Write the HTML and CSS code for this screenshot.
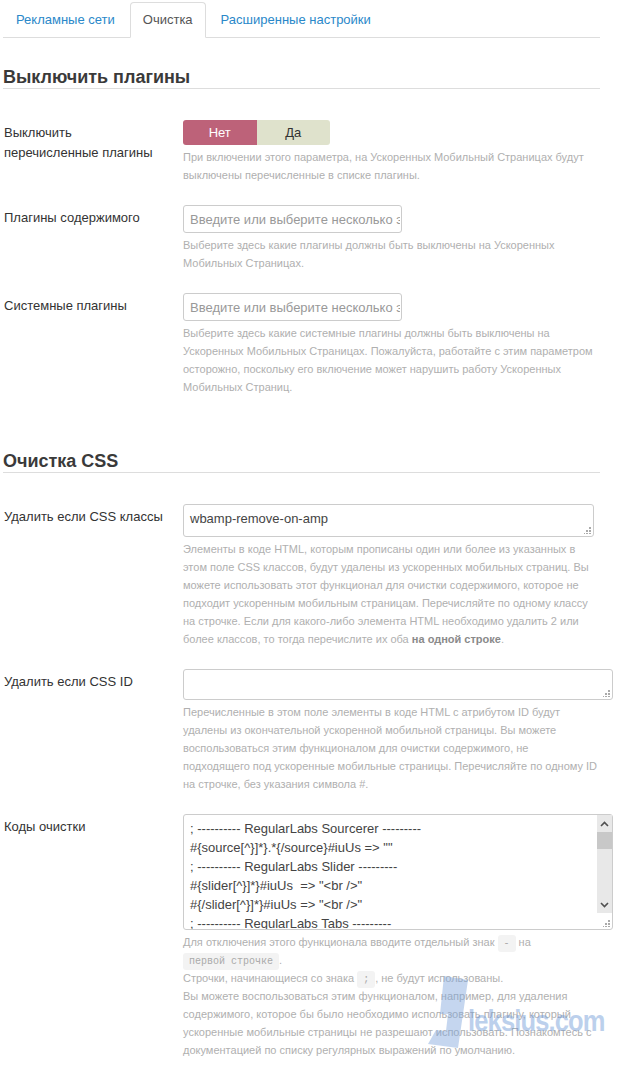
FILE: index.html
```html
<!doctype html>
<html lang="ru">
    <head>
        <meta charset="utf-8">
        <title>Очистка</title>
        <link rel="stylesheet" href="styles.css">
    </head>
    <body>
        <div class="page">
            <!-- Tabs -->
            <ul class="tabs">
                <li><a href="#ads">Рекламные сети</a></li>
                <li class="active"><a href="#cleanup">Очистка</a></li>
                <li><a href="#advanced">Расширенные настройки</a></li>
            </ul>

            <!-- Plugins -->
            <h2 class="section-title first">Выключить плагины</h2>

            <div class="field">
                <div class="field-label">Выключить<br>перечисленные плагины</div>
                <div class="field-control">
                    <div class="switch">
                        <span class="switch-option on">Нет</span>
                        <span class="switch-option">Да</span>
                    </div>
                    <p class="hint">При включении этого параметра, на Ускоренных Мобильный Страницах будут<br>выключены перечисленные в списке плагины.</p>
                </div>
            </div>

            <div class="field">
                <div class="field-label">Плагины содержимого</div>
                <div class="field-control">
                    <input class="chosen" type="text" placeholder="Введите или выберите несколько элементов">
                    <p class="hint">Выберите здесь какие плагины должны быть выключены на Ускоренных<br>Мобильных Страницах.</p>
                </div>
            </div>

            <div class="field">
                <div class="field-label">Системные плагины</div>
                <div class="field-control">
                    <input class="chosen" type="text" placeholder="Введите или выберите несколько элементов">
                    <p class="hint">Выберите здесь какие системные плагины должны быть выключены на<br>Ускоренных Мобильных Страницах. Пожалуйста, работайте с этим параметром<br>осторожно, поскольку его включение может нарушить работу Ускоренных<br>Мобильных Страниц.</p>
                </div>
            </div>

            <!-- CSS cleanup -->
            <h2 class="section-title">Очистка CSS</h2>

            <div class="field">
                <div class="field-label">Удалить если CSS классы</div>
                <div class="field-control">
                    <div class="text-box short">
                        <textarea class="text">wbamp-remove-on-amp</textarea>
                        <svg class="grip" width="7" height="7" viewBox="0 0 7 7"><path d="M5 0h2v2h-2zM2 3h2v2h-2zM5 3h2v2h-2zM-1 6h2v1h-2zM2 6h2v1h-2zM5 6h2v1h-2z" fill="#aaa"/></svg>
                    </div>
                    <p class="hint">Элементы в коде HTML, которым прописаны один или более из указанных в<br>этом поле CSS классов, будут удалены из ускоренных мобильных страниц. Вы<br>можете использовать этот функционал для очистки содержимого, которое не<br>подходит ускоренным мобильным страницам. Перечисляйте по одному классу<br>на строчке. Если для какого-либо элемента HTML необходимо удалить 2 или<br>более классов, то тогда перечислите их оба <strong>на одной строке</strong>.</p>
                </div>
            </div>

            <div class="field">
                <div class="field-label">Удалить если CSS ID</div>
                <div class="field-control">
                    <div class="text-box wide">
                        <textarea class="text"></textarea>
                        <svg class="grip" width="7" height="7" viewBox="0 0 7 7"><path d="M5 0h2v2h-2zM2 3h2v2h-2zM5 3h2v2h-2zM-1 6h2v1h-2zM2 6h2v1h-2zM5 6h2v1h-2z" fill="#aaa"/></svg>
                    </div>
                    <p class="hint">Перечисленные в этом поле элементы в коде HTML с атрибутом ID будут<br>удалены из окончательной ускоренной мобильной страницы. Вы можете<br>воспользоваться этим функционалом для очистки содержимого, не<br>подходящего под ускоренные мобильные страницы. Перечисляйте по одному ID<br>на строчке, без указания символа #.</p>
                </div>
            </div>

            <div class="field">
                <div class="field-label">Коды очистки</div>
                <div class="field-control">
                    <div class="text-box wide codes">
<textarea class="text">; ---------- RegularLabs Sourcerer ---------
#{source[^}]*}.*{/source}#iuUs => ""
; ---------- RegularLabs Slider ---------
#{slider[^}]*}#iuUs  => "&lt;br /&gt;"
#{/slider[^}]*}#iuUs => "&lt;br /&gt;"
; ---------- RegularLabs Tabs ---------
#{tab[^}]*}#iuUs  => "&lt;br /&gt;"
#{/tabs[^}]*}#iuUs => "&lt;br /&gt;"
; ---------- RegularLabs Modules Anywhere ---------
#{module[^}]*}#iuUs => ""
#{modulepos[^}]*}#iuUs => ""
; ---------- RegularLabs Articles Anywhere ---------
#{article[^}]*}.*{/article}#iuUs => ""
; ---------- RegularLabs Tooltips ---------
#{tip[^}]*}#iuUs => ""
#{/tip}#iuUs => ""
; ---------- RegularLabs Modals ---------
#{modal[^}]*}#iuUs => ""
#{/modal}#iuUs => ""
; ---------- RegularLabs ReReplacer ---------
#{rereplacer[^}]*}#iuUs => ""
; ---------- Joomla ---------
#{loadposition[^}]*}#iuUs => ""
#{loadmodule[^}]*}#iuUs => ""</textarea>
                        <!-- vertical scrollbar -->
                        <div class="scrollbar">
                            <span class="sb-btn"><svg width="9" height="6" viewBox="0 0 9 6"><path d="M1 5l3.5-3.5L8 5" fill="none" stroke="#505050" stroke-width="1.6"/></svg></span>
                            <span class="sb-track"><span class="sb-thumb"></span></span>
                            <span class="sb-btn"><svg width="9" height="6" viewBox="0 0 9 6"><path d="M1 1l3.5 3.5L8 1" fill="none" stroke="#505050" stroke-width="1.6"/></svg></span>
                        </div>
                        <svg class="grip" width="7" height="7" viewBox="0 0 7 7"><path d="M5 0h2v2h-2zM2 3h2v2h-2zM5 3h2v2h-2zM-1 6h2v1h-2zM2 6h2v1h-2zM5 6h2v1h-2z" fill="#aaa"/></svg>
                    </div>
                    <p class="hint">Для отключения этого функционала вводите отдельный знак <code>-</code> на<br><code>первой строчке</code>.<br>Строчки, начинающиеся со знака <code>;</code>, не будут использованы.<br>Вы можете воспользоваться этим функционалом, например, для удаления<br>содержимого, которое бы было необходимо использовать плагину, который<br>ускоренные мобильные страницы не разрешают использовать. Познакомтесь с<br>документацией по списку регулярных выражений по умолчанию.</p>
                </div>
            </div>

            <!-- site mark -->
            <div class="mark">
                <svg class="mark-a" width="46" height="76" viewBox="0 0 46 76">
                    <path d="M20 2 L44 6 L34 74 L4 70 L12 56 L22 57 L24 40 L16 40 Z" fill="#7fa6dc"/>
                </svg>
                <span class="mark-text">leksius.com</span>
            </div>
        </div>
    </body>
</html>
```

FILE: styles.css
```css
body {
    margin: 0;
    font-family: "Liberation Sans", Arial, sans-serif;
    font-size: 13px;
    color: #333;
    background-color: #fff;
}

.page {
    position: relative;
    width: 597px;
    padding: 2px 0 20px 3px;
}

/* tabs */
.tabs {
    display: flex;
    list-style: none;
    margin: 0;
    padding: 0;
    border-bottom: 1px solid #ddd;
}

.tabs li {
    margin-bottom: -1px;
    margin-right: 2px;
}

.tabs a {
    display: block;
    padding: 8px 12px;
    line-height: 18px;
    border: 1px solid transparent;
    border-radius: 4px 4px 0 0;
    color: #2a88c9;
    text-decoration: none;
}

.tabs .active a {
    border-color: #ddd #ddd transparent;
    background-color: #fff;
    color: #555;
}

/* section headings */
.section-title {
    margin: 54px 0 31px;
    font-size: 18px;
    line-height: 22px;
    font-weight: bold;
    color: #3a3a3a;
    border-bottom: 1px solid #ddd;
}

.section-title.first {
    margin-top: 28px;
}

/* form rows */
.field {
    display: grid;
    grid-template-columns: 180px 1fr;
    margin-bottom: 21px;
}

.field-label {
    padding-top: 3px;
    padding-left: 1px;
    line-height: 20px;
    color: #333;
}

.field-control {
    min-width: 0;
}

.hint {
    margin: 3px 0 0;
    font-size: 11px;
    line-height: 18px;
    color: #b0b0b0;
    white-space: nowrap;
}

.hint strong {
    color: #8a8a8a;
}

.hint code {
    font-family: "Liberation Mono", monospace;
    font-size: 10px;
    line-height: 1;
    padding: 3px 6px;
    border-radius: 3px;
    background-color: #f3f3f3;
    color: #aaa;
}

/* yes / no switch */
.switch {
    display: flex;
    width: 147px;
    height: 25px;
    border-radius: 3px;
    overflow: hidden;
}

.switch-option {
    flex: 1;
    line-height: 25px;
    text-align: center;
    background-color: #dfe2cc;
    color: #333;
}

.switch-option.on {
    background-color: #bd6279;
    color: #fff;
}

/* inputs */
.chosen {
    box-sizing: border-box;
    display: block;
    width: 219px;
    height: 28px;
    margin: 0;
    padding: 4px 1px 4px 6px;
    border: 1px solid #ccc;
    border-radius: 3px;
    font-family: inherit;
    font-size: 13px;
    color: #555;
}

.chosen::placeholder {
    color: #999;
}

.text-box {
    position: relative;
}

.text-box.short {
    width: 411px;
    height: 33px;
}

.text-box.wide {
    width: 430px;
    height: 31px;
}

.text-box.codes {
    height: 116px;
}

.text {
    box-sizing: border-box;
    display: block;
    width: 100%;
    height: 100%;
    margin: 0;
    padding: 4px 6px;
    border: 1px solid #ccc;
    border-radius: 3px;
    font-family: inherit;
    font-size: 13px;
    line-height: 19px;
    color: #444;
    resize: none;
    overflow: hidden;
}

.codes .text {
    padding-right: 22px;
    white-space: pre;
}

.grip {
    position: absolute;
    right: 3px;
    bottom: 3px;
}

.scrollbar {
    position: absolute;
    top: 1px;
    right: 1px;
    width: 15px;
    height: 98px;
    display: flex;
    flex-direction: column;
    background-color: #e8e8e8;
}

.sb-btn {
    height: 17px;
    display: flex;
    align-items: center;
    justify-content: center;
}

.sb-track {
    flex: 1;
}

.sb-thumb {
    display: block;
    height: 17px;
    background-color: #c8c8c8;
}

/* watermark over the last hint */
.mark {
    position: absolute;
    left: 424px;
    top: 974px;
    display: flex;
    align-items: flex-end;
    opacity: 0.45;
    pointer-events: none;
}

.mark-text {
    margin-left: -2px;
    margin-bottom: 14px;
    font-size: 30px;
    line-height: 30px;
    font-weight: bold;
    letter-spacing: -1px;
    color: #6d98d6;
    transform: scaleX(0.85);
    transform-origin: left bottom;
}
```
